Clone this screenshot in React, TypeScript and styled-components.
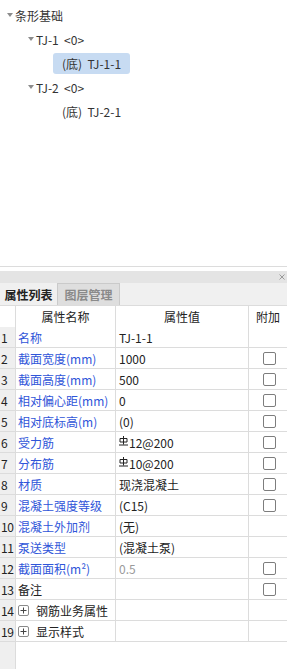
import styled, { createGlobalStyle } from "styled-components";

const GlobalStyle = createGlobalStyle`
  html, body {
    margin: 0;
    padding: 0;
    background: #ffffff;
  }
  body {
    font-family: "Noto Sans CJK SC", "Noto Sans", sans-serif;
    font-size: 12px;
    color: #222;
  }
`;

const Page = styled.div`
  width: 287px;
  height: 669px;
  display: flex;
  flex-direction: column;
  overflow: hidden;
`;

const TreePane = styled.div`
  height: 263px;
  padding-top: 3px;
  border-bottom: 1px solid #dcdcdc;
  display: flex;
  flex-direction: column;
`;

const TreeRow = styled.div<{ $indent: number }>`
  height: 24px;
  display: flex;
  align-items: center;
  padding-left: ${(p) => p.$indent}px;
  font-size: 12px;
  color: #333;
  white-space: pre;
`;

const Caret = styled.span`
  width: 6px;
  height: 8px;
  margin-right: 2px;
  display: flex;
  align-items: center;
`;

const Leaf = styled.span<{ $selected?: boolean }>`
  height: 21px;
  display: flex;
  align-items: center;
  padding: 0 9px;
  border-radius: 3px;
  background: ${(p) => (p.$selected ? "#c7dbf2" : "transparent")};
`;

const Gap = styled.div`
  height: 4px;
`;

const TitleBar = styled.div`
  height: 12px;
  background: #e4e4e4;
  display: flex;
  justify-content: flex-end;
  align-items: center;
  padding-right: 2px;
`;

const TabBar = styled.div`
  height: 22px;
  background: #f0f0f0;
  display: flex;
  align-items: stretch;
`;

const Tab = styled.div<{ $active?: boolean }>`
  width: ${(p) => (p.$active ? 57 : 63)}px;
  box-sizing: border-box;
  display: flex;
  align-items: center;
  justify-content: center;
  font-size: 12px;
  font-weight: 700;
  color: ${(p) => (p.$active ? "#222" : "#8a8a8a")};
  background: ${(p) => (p.$active ? "#f0f0f0" : "#dedede")};
  border: ${(p) => (p.$active ? "none" : "1px solid #cacaca")};
  border-bottom: none;
`;

const Grid = styled.div`
  flex: 1;
  display: grid;
  grid-template-columns: 16px 100px 133px 38px;
  grid-auto-rows: 21px;
  align-content: start;
  border-top: 1px solid #dcdcdc;
  background: linear-gradient(to right, #efefef 0, #efefef 15px, #dcdcdc 15px, #dcdcdc 16px, #fff 16px);
`;

const Cell = styled.div<{ $last?: boolean }>`
  box-sizing: border-box;
  background: #fff;
  border-bottom: 1px solid #dcdcdc;
  border-right: ${(p) => (p.$last ? "none" : "1px solid #dcdcdc")};
  display: flex;
  align-items: center;
  white-space: nowrap;
  overflow: hidden;
  font-size: 12px;
`;

const HeadCell = styled(Cell)`
  height: 22px;
  justify-content: center;
  color: #222;
`;

const NumCell = styled(Cell)`
  background: #efefef;
  padding-left: 1px;
  letter-spacing: -0.5px;
  color: #222;
`;

const NameCell = styled(Cell)<{ $blue?: boolean }>`
  padding-left: 2px;
  color: ${(p) => (p.$blue ? "#2f55d9" : "#222")};
`;

const ValueCell = styled(Cell)<{ $muted?: boolean }>`
  padding-left: 3px;
  color: ${(p) => (p.$muted ? "#9a9a9a" : "#222")};
`;

const CheckCell = styled(Cell)`
  justify-content: flex-end;
  padding-right: 11px;
`;

const Check = styled.span`
  width: 13px;
  height: 13px;
  box-sizing: border-box;
  border: 1px solid #7d7d7d;
  border-radius: 2px;
  background: #fff;
`;

const Expander = styled.span`
  width: 11px;
  height: 11px;
  box-sizing: border-box;
  border: 1px solid #8a8a8a;
  border-radius: 2px;
  margin: 0 7px 0 0;
  display: flex;
  align-items: center;
  justify-content: center;
`;

const Rebar = styled.svg`
  margin-right: 1px;
  align-self: flex-start;
  margin-top: 4px;
`;

function DownCaret() {
  return (
    <Caret>
      <svg width="6" height="4" viewBox="0 0 6 4">
        <path d="M0 0 L6 0 L3 4 Z" fill="#8c8c8c" />
      </svg>
    </Caret>
  );
}

function RebarMark() {
  return (
    <Rebar width="9" height="10" viewBox="0 0 9 10">
      <path d="M4.5 0 V8.5 M1 2.5 H8 V6 H1 Z M0 9 H9" stroke="#222" strokeWidth="1" fill="none" />
    </Rebar>
  );
}

type Row = {
  no: string;
  name: string;
  value?: string;
  rebar?: boolean;
  blue?: boolean;
  muted?: boolean;
  check?: boolean;
  group?: boolean;
};

const rows: Row[] = [
  { no: "1", name: "名称", value: "TJ-1-1", blue: true },
  { no: "2", name: "截面宽度(mm)", value: "1000", blue: true, check: true },
  { no: "3", name: "截面高度(mm)", value: "500", blue: true, check: true },
  { no: "4", name: "相对偏心距(mm)", value: "0", blue: true, check: true },
  { no: "5", name: "相对底标高(m)", value: "(0)", blue: true, check: true },
  { no: "6", name: "受力筋", value: "12@200", rebar: true, blue: true, check: true },
  { no: "7", name: "分布筋", value: "10@200", rebar: true, blue: true, check: true },
  { no: "8", name: "材质", value: "现浇混凝土", blue: true, check: true },
  { no: "9", name: "混凝土强度等级", value: "(C15)", blue: true, check: true },
  { no: "10", name: "混凝土外加剂", value: "(无)", blue: true },
  { no: "11", name: "泵送类型", value: "(混凝土泵)", blue: true },
  { no: "12", name: "截面面积(m²)", value: "0.5", blue: true, muted: true, check: true },
  { no: "13", name: "备注", value: "", check: true },
  { no: "14", name: "钢筋业务属性", group: true },
  { no: "19", name: "显示样式", group: true },
];

export default function App() {
  return (
    <Page>
      <GlobalStyle />
      <TreePane>
        <TreeRow $indent={7}>
          <DownCaret />
          条形基础
        </TreeRow>
        <TreeRow $indent={28}>
          <DownCaret />
          {"TJ-1  <0>"}
        </TreeRow>
        <TreeRow $indent={53}>
          <Leaf $selected>{"(底)  TJ-1-1"}</Leaf>
        </TreeRow>
        <TreeRow $indent={28}>
          <DownCaret />
          {"TJ-2  <0>"}
        </TreeRow>
        <TreeRow $indent={53}>
          <Leaf>{"(底)  TJ-2-1"}</Leaf>
        </TreeRow>
      </TreePane>
      <Gap />
      <TitleBar>
        <svg width="6" height="6" viewBox="0 0 6 6">
          <path d="M0.5 0.5 L5.5 5.5 M5.5 0.5 L0.5 5.5" stroke="#9a9a9a" strokeWidth="1" />
        </svg>
      </TitleBar>
      <TabBar>
        <Tab $active>属性列表</Tab>
        <Tab>图层管理</Tab>
      </TabBar>
      <Grid>
        <HeadCell />
        <HeadCell>属性名称</HeadCell>
        <HeadCell>属性值</HeadCell>
        <HeadCell $last>附加</HeadCell>
        {rows.map((r) => (
          <>
            <NumCell key={r.no + "n"}>{r.no}</NumCell>
            <NameCell key={r.no + "a"} $blue={r.blue}>
              {r.group && (
                <Expander>
                  <svg width="7" height="7" viewBox="0 0 7 7">
                    <path d="M3.5 0.5 V6.5 M0.5 3.5 H6.5" stroke="#444" strokeWidth="1" />
                  </svg>
                </Expander>
              )}
              {r.name}
            </NameCell>
            <ValueCell key={r.no + "v"} $muted={r.muted}>
              {r.rebar && <RebarMark />}
              {r.value}
            </ValueCell>
            <CheckCell key={r.no + "c"} $last>
              {r.check && <Check />}
            </CheckCell>
          </>
        ))}
      </Grid>
    </Page>
  );
}
